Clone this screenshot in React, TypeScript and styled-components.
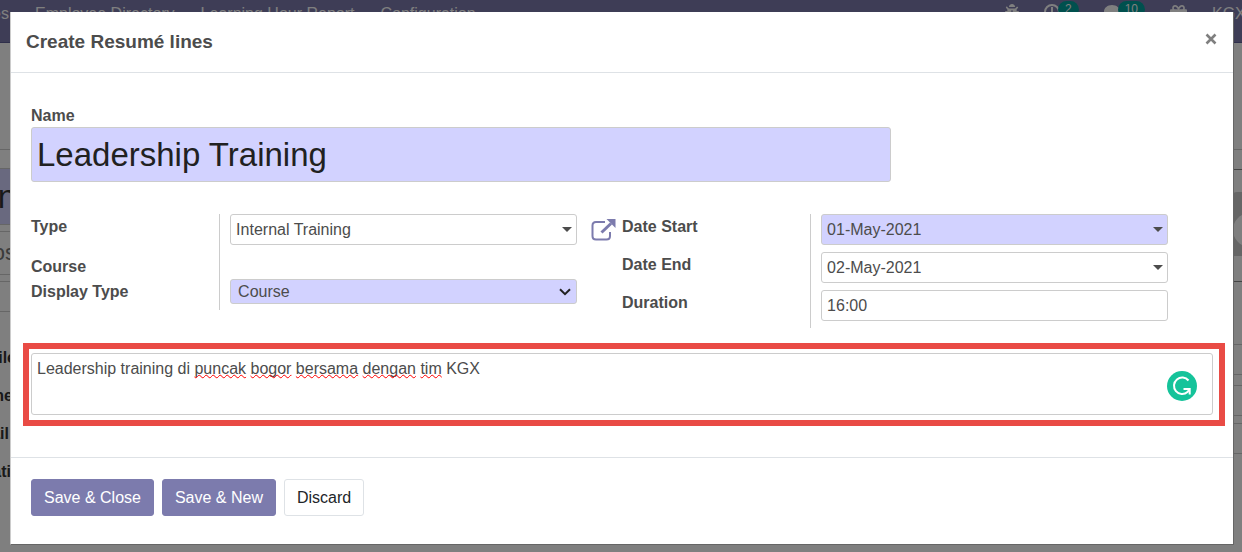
import React from "react";
import styled, { createGlobalStyle } from "styled-components";
import { FaGift, FaComment, FaBug } from "react-icons/fa";

const purple = "#7c7bad";
const lilac = "#d2d2ff";
const line = "#cccccc";

const Global = createGlobalStyle`
  * { box-sizing: border-box; }
  html, body, #root { height: 100%; }
  body {
    margin: 0;
    overflow: hidden;
    background: #fff;
    color: #4c4c4c;
    font: 16px/24px "Liberation Sans", Arial, sans-serif;
  }
  button, input, select, textarea { font: inherit; color: inherit; margin: 0; }
`;

const Page = styled.div`
  min-height: 100vh;
  display: flex;
  flex-direction: column;
`;

const NavBar = styled.nav`
  height: 43px;
  display: flex;
  justify-content: space-between;
  padding: 2px 0 0;
  background: ${purple};
  border-bottom: 1px solid #5f5e97;
  color: #fff;
  overflow: hidden;
`;

const NavGroup = styled.div<{ $gap: number }>`
  display: flex;
  align-items: flex-start;
  gap: ${(p) => p.$gap}px;
  white-space: nowrap;
`;

const NavLink = styled.a`
  color: inherit;
  text-decoration: none;
`;

const BrandLink = styled(NavLink)`
  width: 9px;
  display: flex;
  justify-content: flex-end;
`;

const SysItem = styled.span`
  display: flex;
  align-items: flex-start;
  padding-top: 2px;
`;

const Count = styled.span`
  margin: -3px 0 0 -2px;
  padding: 0 7px;
  border-radius: 9px;
  background: #00a09d;
  font-size: 12px;
  line-height: 17px;
`;

const UserName = styled(NavLink)`
  width: 30px;
  overflow: hidden;
`;

const Sheet = styled.main`
  flex: 1;
  display: flex;
  justify-content: space-between;
`;

const Column = styled.div`
  width: 16px;
  overflow: hidden;
`;

const Strip = styled.div<{ $height: number; $tone?: string; $fill?: string; $size?: number }>`
  height: ${(p) => p.$height}px;
  display: flex;
  justify-content: flex-end;
  align-items: center;
  overflow: hidden;
  white-space: nowrap;
  color: #333;
  background: ${(p) => p.$fill ?? "transparent"};
  border-bottom: 1px solid ${(p) => p.$tone ?? "transparent"};
  font-size: ${(p) => p.$size ?? 16}px;
`;

const JobTitle = styled(Strip)`
  color: #777;
`;

const FieldName = styled(Strip)<{ $inset: number }>`
  font-weight: bold;
  padding-right: ${(p) => p.$inset}px;
`;

const Avatar = styled.svg`
  display: block;
`;

const Backdrop = styled.div`
  position: fixed;
  inset: 0;
  padding: 12px 8px 7px 10px;
  background: rgba(0, 0, 0, 0.5);
`;

const Dialog = styled.section`
  background: #fff;
  border: solid #666;
  border-width: 0 1px 1px 1px;
  border-left-color: #ccc;
`;

const DialogHeader = styled.header`
  height: 61px;
  display: flex;
  align-items: center;
  justify-content: space-between;
  padding: 0 16px 0 15px;
  border-bottom: 1px solid #dee2e6;
`;

const Title = styled.h4`
  margin: 0;
  font-size: 19px;
  line-height: 30px;
`;

const CloseButton = styled.button`
  display: flex;
  padding: 0 0 6px;
  border: 0;
  background: none;
  color: #7f7f7f;
`;

const Body = styled.form`
  padding: 31px 20px 31px;
`;

const Label = styled.label`
  display: block;
  font-weight: bold;
`;

const NameLabel = styled(Label)`
  line-height: 23px;
`;

const Control = styled.input<{ $required?: boolean }>`
  display: block;
  width: 100%;
  height: 31px;
  padding: 0 5px;
  border: 1px solid ${line};
  border-radius: 3px;
  background: ${(p) => (p.$required ? lilac : "#fff")};
  outline: 0;
`;

const NameControl = styled(Control)`
  max-width: 860px;
  height: 55px;
  font-size: 33px;
  color: #212121;
`;

const Select = styled.select`
  display: block;
  width: 100%;
  height: 25px;
  padding: 0 7px;
  appearance: none;
  border: 1px solid ${line};
  border-radius: 3px;
  background: ${lilac};
  outline: 0;
`;

const Groups = styled.div`
  display: grid;
  grid-template-columns: 1fr 1fr;
  align-items: start;
  margin-top: 32px;
`;

const Group = styled.div`
  display: grid;
  grid-template-columns: 32% 1fr;
`;

const LabelCell = styled.div<{ $height: number; $low?: boolean }>`
  height: ${(p) => p.$height}px;
  display: flex;
  align-items: ${(p) => (p.$low ? "flex-end" : "flex-start")};
  border-right: 1px solid ${line};

  ${Label} {
    line-height: 26px;
    margin-bottom: ${(p) => (p.$low ? -1 : 0)}px;
  }
`;

const FieldCell = styled.div`
  display: flex;
  align-items: flex-start;
  padding-left: 10px;
`;

const ControlWrap = styled.div`
  position: relative;
  flex: 1;
`;

const Side = styled.div`
  width: 45px;
  padding: 5px 0 0 14px;
`;

const LinkButton = styled.button`
  display: block;
  padding: 0;
  border: 0;
  background: none;
  color: ${purple};
`;

const Caret = styled.span`
  position: absolute;
  top: 13px;
  right: 5px;
  border: solid transparent;
  border-width: 5px 5px 0;
  border-top-color: #4c4c4c;
  pointer-events: none;
`;

const Chevron = styled.svg`
  position: absolute;
  top: 9px;
  right: 6px;
  pointer-events: none;
`;

const Highlight = styled.div`
  margin: 15px -12px 0 -8px;
  padding: 4px 6px 5px 2px;
  border: 6px solid #e94b45;
`;

const Notes = styled.div`
  position: relative;
  height: 62px;
  border: 1px solid ${line};
  border-radius: 3px;
`;

const SpellLayer = styled.div`
  position: absolute;
  inset: 0;
  padding: 3px 5px;
  color: transparent;
  pointer-events: none;
`;

const Misspelt = styled.span`
  text-decoration: underline wavy #f00 1px;
  text-decoration-skip-ink: none;
  text-underline-offset: 0;
`;

const NotesArea = styled.textarea`
  display: block;
  width: 100%;
  height: 100%;
  padding: 3px 5px;
  border: 0;
  background: none;
  outline: 0;
  resize: none;
`;

const Checker = styled.svg`
  position: absolute;
  right: 15px;
  bottom: 13px;
`;

const Footer = styled.footer`
  display: flex;
  gap: 8px;
  padding: 21px 20px 28px;
  border-top: 1px solid #dee2e6;
`;

const Button = styled.button<{ $primary?: boolean }>`
  height: 37px;
  padding: 0 12px;
  border: 1px solid ${(p) => (p.$primary ? purple : "#dee2e6")};
  border-radius: 3px;
  background: ${(p) => (p.$primary ? purple : "#fff")};
  color: ${(p) => (p.$primary ? "#fff" : "#212529")};
`;

const words = "Leadership training di puncak bogor bersama dengan tim KGX".split(" ");
const unknown = ["puncak", "bogor", "bersama", "dengan", "tim"];

function Background() {
  return (
    <Page>
      <NavBar>
        <NavGroup $gap={26}>
          <BrandLink href="#">Employees</BrandLink>
          <NavLink href="#">Employee Directory</NavLink>
          <NavLink href="#">Learning Hour Report</NavLink>
          <NavLink href="#">Configuration</NavLink>
        </NavGroup>
        <NavGroup $gap={25}>
          <SysItem><FaBug size={14} /></SysItem>
          <SysItem>
            <svg width="16" height="16" viewBox="0 0 16 16" fill="none" stroke="currentColor" strokeWidth="2">
              <circle cx="8" cy="8" r="7" />
              <path d="M8 3v6H5" />
            </svg>
            <Count>2</Count>
          </SysItem>
          <SysItem><FaComment size={16} /><Count>10</Count></SysItem>
          <SysItem><FaGift size={17} /></SysItem>
          <UserName href="#">KGX</UserName>
        </NavGroup>
      </NavBar>
      <Sheet>
        <Column>
          <Strip $height={107} $tone={line} />
          <Strip $height={19} $tone={line} />
          <Strip $height={56} $tone={line} $fill={lilac} $size={33}>Employee n</Strip>
          <Strip $height={7} $tone={line} />
          <JobTitle $height={43} $tone={line} $size={22}>Job Pos</JobTitle>
          <Strip $height={7} $tone={line} />
          <Strip $height={30} $tone={line} />
          <Strip $height={27} />
          <FieldName $height={38} $inset={0}>Work Mobile</FieldName>
          <FieldName $height={38} $inset={3}>Work Phone</FieldName>
          <FieldName $height={38} $inset={7}>Work Email</FieldName>
          <FieldName $height={38} $inset={5}>Work Locati</FieldName>
        </Column>
        <Column>
          <Strip $height={107} $tone={line} />
          <Strip $height={20} $tone="#888" />
          <Strip $height={22} />
          <Avatar width="16" height="64" viewBox="0 0 16 64">
            <path d="M5 4q2-4 6-4h5v64H5z" fill="#ccc" />
            <circle cx="24" cy="38" r="17" fill="#fff" />
          </Avatar>
          <Strip $height={26} $tone="#888" />
          <Strip $height={63} $tone={line} />
          <Strip $height={30} $tone={line} />
          <Strip $height={11} $tone={line} />
          <Strip $height={30} $tone={line} />
          <Strip $height={8} $tone={line} />
          <Strip $height={30} $tone={line} />
        </Column>
      </Sheet>
    </Page>
  );
}

export default function App() {
  return (
    <>
      <Global />
      <Background />
      <Backdrop>
        <Dialog role="dialog" aria-labelledby="dialog-title">
          <DialogHeader>
            <Title id="dialog-title">Create Resumé lines</Title>
            <CloseButton type="button" aria-label="Close">
              <svg width="12" height="12" viewBox="0 0 12 12" stroke="currentColor" strokeWidth="2.6">
                <path d="M1.5 1.5l9 9M10.5 1.5l-9 9" />
              </svg>
            </CloseButton>
          </DialogHeader>
          <Body>
            <NameLabel htmlFor="name">Name</NameLabel>
            <NameControl id="name" $required defaultValue="Leadership Training" />
            <Groups>
              <Group>
                <LabelCell $height={38}><Label htmlFor="type">Type</Label></LabelCell>
                <FieldCell>
                  <ControlWrap>
                    <Control id="type" defaultValue="Internal Training" />
                    <Caret />
                  </ControlWrap>
                  <Side>
                    <LinkButton type="button" aria-label="External link">
                      <svg width="25" height="23" viewBox="0 0 25 23" fill="none" stroke="currentColor">
                        <path d="M14 3H5Q1.500 3 1.500 6.500V17Q1.500 20.500 5 20.500H15.500Q19 20.500 19 17V13" strokeWidth="2" />
                        <path d="M10.500 13.500L20 4.500" strokeWidth="3" />
                        <path d="M15.500 0H24.500V9z" fill="currentColor" stroke="none" />
                      </svg>
                    </LinkButton>
                  </Side>
                </FieldCell>
                <LabelCell $height={27} $low><Label as="span">Course</Label></LabelCell>
                <FieldCell />
                <LabelCell $height={31}><Label htmlFor="display">Display Type</Label></LabelCell>
                <FieldCell>
                  <ControlWrap>
                    <Select id="display" defaultValue="Course">
                      <option>Course</option>
                    </Select>
                    <Chevron width="12" height="8" viewBox="0 0 12 8" fill="none" stroke="#222" strokeWidth="2">
                      <path d="M1 1.200l5 5 5-5" />
                    </Chevron>
                  </ControlWrap>
                  <Side />
                </FieldCell>
              </Group>
              <Group>
                <LabelCell $height={38}><Label htmlFor="start">Date Start</Label></LabelCell>
                <FieldCell>
                  <ControlWrap>
                    <Control id="start" $required defaultValue="01-May-2021" />
                    <Caret />
                  </ControlWrap>
                  <Side />
                </FieldCell>
                <LabelCell $height={38}><Label htmlFor="end">Date End</Label></LabelCell>
                <FieldCell>
                  <ControlWrap>
                    <Control id="end" defaultValue="02-May-2021" />
                    <Caret />
                  </ControlWrap>
                  <Side />
                </FieldCell>
                <LabelCell $height={38}><Label htmlFor="duration">Duration</Label></LabelCell>
                <FieldCell>
                  <ControlWrap>
                    <Control id="duration" defaultValue="16:00" />
                  </ControlWrap>
                  <Side />
                </FieldCell>
              </Group>
            </Groups>
            <Highlight>
              <Notes>
                <SpellLayer aria-hidden="true">
                  {words.map((w) => (
                    <React.Fragment key={w}>
                      {unknown.includes(w) ? <Misspelt>{w}</Misspelt> : w}{" "}
                    </React.Fragment>
                  ))}
                </SpellLayer>
                <NotesArea aria-label="Description" spellCheck={false} defaultValue={words.join(" ")} />
                <Checker width="30" height="30" viewBox="0 0 30 30" fill="none" stroke="#fff" strokeWidth="2">
                  <circle cx="15" cy="15" r="15" fill="#15c39a" stroke="none" />
                  <path d="M21.500 9.500A8.200 8.200 0 1 0 20.500 21L22.300 18.500" />
                  <path d="M16.500 18H22.700V23.500" />
                </Checker>
              </Notes>
            </Highlight>
          </Body>
          <Footer>
            <Button type="button" $primary>Save &amp; Close</Button>
            <Button type="button" $primary>Save &amp; New</Button>
            <Button type="button">Discard</Button>
          </Footer>
        </Dialog>
      </Backdrop>
    </>
  );
}
